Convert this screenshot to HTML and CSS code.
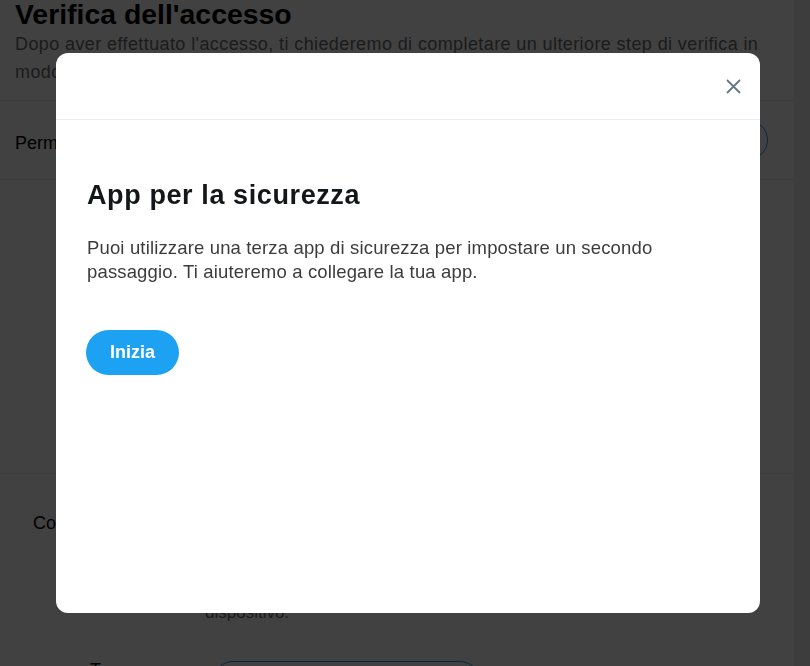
FILE: index.html
```html
<!DOCTYPE html>
<html lang="it">
<head>
<meta charset="utf-8">
<title>Verifica dell'accesso</title>
<link rel="stylesheet" href="styles.css">
</head>
<body>
<div class="page">
  <main class="primary">
    <header class="section-head">
      <h1 class="page-title">Verifica dell'accesso</h1>
      <p class="page-sub">Dopo aver effettuato l'accesso, ti chiederemo di completare un ulteriore step di verifica in modo da proteggere il tuo account.</p>
    </header>
    <div class="setting-row">
      <span class="setting-label">Permetti la verifica dell'accesso</span>
      <span class="outline-pill">Configura</span>
    </div>
    <div class="setting-empty"></div>
    <section class="method">
      <div class="method-title">Codice di backup</div>
      <p class="method-desc">Usa un'app di autenticazione per ricevere il codice sul tuo<br>dispositivo.</p>
      <div class="method-row">
        <span class="method-label">T</span>
        <span class="outline-pill wide">Genera codice</span>
      </div>
    </section>
  </main>
  <aside class="side"></aside>
</div>

<div class="overlay">
  <div class="modal" role="dialog" aria-labelledby="modal-title">
    <div class="modal-head">
      <button class="close-btn" aria-label="Chiudi">
        <svg width="15" height="15" viewBox="0 0 15 15" aria-hidden="true">
          <path d="M1 1 L14 14 M14 1 L1 14" stroke="#657786" stroke-width="1.8" fill="none"/>
        </svg>
      </button>
    </div>
    <div class="modal-body">
      <h2 id="modal-title" class="modal-title">App per la sicurezza</h2>
      <p class="modal-text">Puoi utilizzare una terza app di sicurezza per impostare un secondo passaggio. Ti aiuteremo a collegare la tua app.</p>
      <button class="primary-btn">Inizia</button>
    </div>
  </div>
</div>
</body>
</html>
```
FILE: styles.css
```css
html, body {
  margin: 0;
  padding: 0;
  height: 100%;
  overflow: hidden;
}
body {
  font-family: "Liberation Sans", Arial, sans-serif;
  background: #ffffff;
  color: #000;
}
.page {
  display: flex;
  height: 100%;
}
.primary {
  width: 794px;
  flex: none;
  border-right: 1px solid #e6ecf0;
  background: #fff;
}
.side {
  flex: 1;
  background: #ededed;
}
.section-head {
  padding: 0 15px 14px;
  border-bottom: 1px solid #e6ecf0;
}
.page-title {
  margin: 0;
  font-size: 28.4px;
  line-height: 28px;
  font-weight: bold;
  color: #000;
}
.page-sub {
  margin: 2px 0 0;
  font-size: 18px;
  letter-spacing: 0.4px;
  line-height: 28px;
  color: #6e6e6e;
}
.setting-row {
  height: 79px;
  box-sizing: border-box;
  padding: 0 26px 0 15px;
  display: flex;
  align-items: center;
  justify-content: space-between;
  border-bottom: 1px solid #e6ecf0;
}
.setting-label {
  font-size: 18px;
  line-height: 20px;
  padding-top: 6px;
  color: #000;
}
.outline-pill {
  height: 40px;
  box-sizing: border-box;
  padding: 0 24px;
  border: 1.5px solid #1da1f2;
  border-radius: 20px;
  display: inline-flex;
  align-items: center;
  color: #1da1f2;
  font-weight: bold;
  font-size: 16px;
}
.setting-empty {
  height: 293px;
  border-bottom: 1px solid #e6ecf0;
}
.method {
  padding: 37px 0 0 33px;
}
.method-title {
  font-size: 18px;
  line-height: 24px;
  color: #000;
}
.method-desc {
  margin: 36px 0 0 172px;
  font-size: 17px;
  line-height: 28px;
  color: #6e6e6e;
}
.method-row {
  margin-top: 31px;
  padding-left: 57px;
  display: grid;
  grid-template-columns: 123px 267px;
  align-items: start;
}
.method-label {
  font-size: 18px;
  line-height: 24px;
  color: #000;
}
.outline-pill.wide {
  margin-top: 3px;
}

.overlay {
  position: fixed;
  inset: 0;
  background: rgba(0, 0, 0, 0.745);
  padding: 53px 0 0 56px;
}
.modal {
  width: 704px;
  height: 560px;
  background: #fff;
  border-radius: 12px;
  overflow: hidden;
  display: flex;
  flex-direction: column;
}
.modal-head {
  height: 66px;
  flex: none;
  border-bottom: 1px solid #e6ecf0;
  display: flex;
  align-items: center;
  justify-content: flex-end;
  padding-right: 19px;
}
.close-btn {
  border: 0;
  background: none;
  padding: 0;
  width: 15px;
  height: 15px;
  display: block;
  cursor: pointer;
}
.close-btn svg {
  display: block;
}
.modal-body {
  padding: 59px 31px 0;
}
.modal-title {
  margin: 0;
  font-size: 27px;
  line-height: 32px;
  letter-spacing: 0.6px;
  font-weight: bold;
  color: #14171a;
}
.modal-text {
  margin: 25px 0 0;
  font-size: 18.5px;
  line-height: 23.5px;
  letter-spacing: 0.15px;
  color: #3c3c3c;
}
.primary-btn {
  margin-top: 47px;
  margin-left: -1px;
  height: 45px;
  padding: 0 24px;
  border: 0;
  border-radius: 23px;
  background: #1da1f2;
  color: #fff;
  font-family: "Liberation Sans", Arial, sans-serif;
  font-weight: bold;
  font-size: 18px;
  line-height: 45px;
  cursor: pointer;
}
```
